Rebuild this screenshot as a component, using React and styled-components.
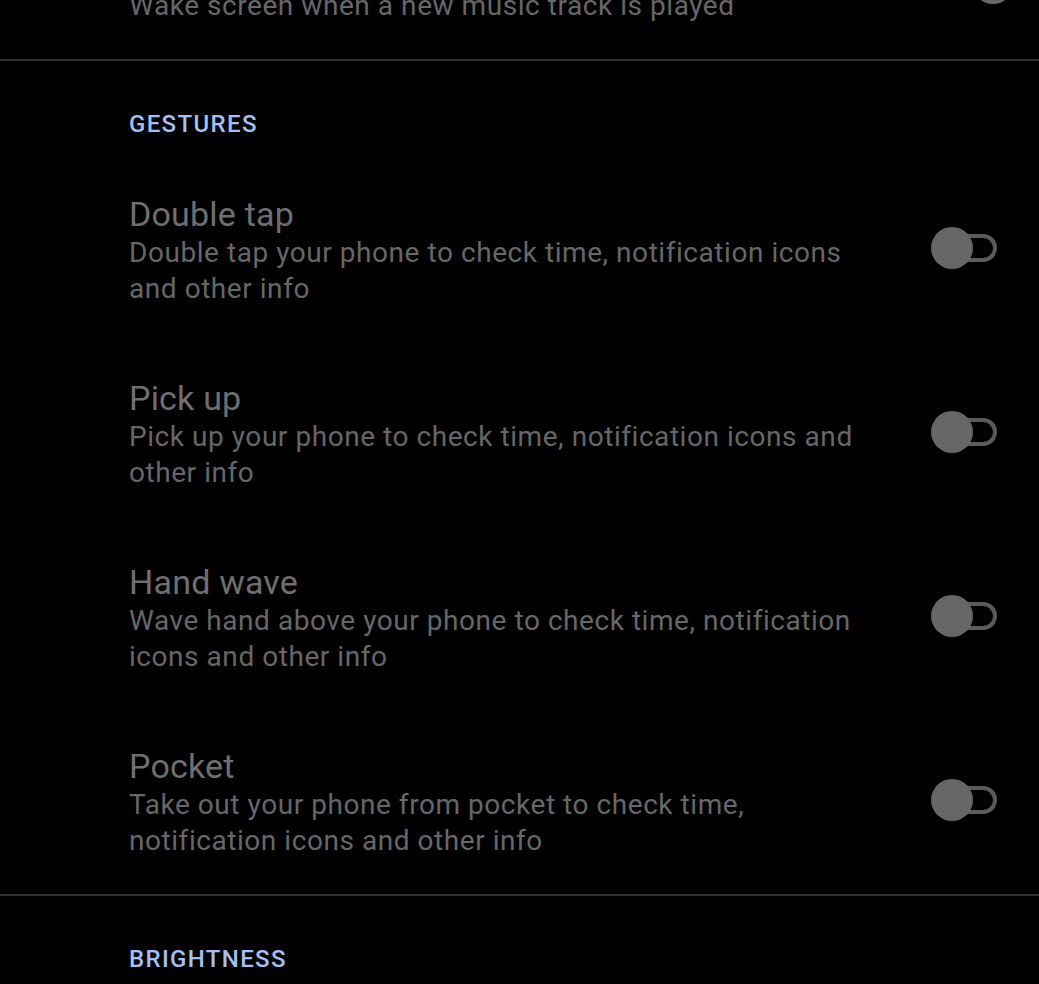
import React from "react";
import styled, { createGlobalStyle } from "styled-components";

const Global = createGlobalStyle`
  html, body { margin: 0; padding: 0; background: #000; }
  body { font-family: Roboto, "Noto Sans", sans-serif; overflow: hidden; }
`;

const Page = styled.div`
  width: 1039px;
  height: 984px;
  overflow: hidden;
  background: #000;
`;

const Scroll = styled.div`
  margin-top: -89px;
  display: flex;
  flex-direction: column;
`;

const Divider = styled.div`
  height: 2px;
  background: #303030;
`;

const Header = styled.div`
  padding: 49px 0 20px 129px;
  font-size: 24px;
  line-height: 28px;
  letter-spacing: 1.35px;
  font-weight: 500;
  color: #a3c0f4;
  text-transform: uppercase;
`;

const Row = styled.div`
  display: grid;
  grid-template-columns: 1fr 76px;
  column-gap: 50px;
  align-items: center;
  padding: 35px 32px 35px 129px;
`;

const Texts = styled.div`
  display: flex;
  flex-direction: column;
`;

const Title = styled.div`
  font-size: 34px;
  line-height: 42px;
  letter-spacing: 0.2px;
  color: #6f6f6f;
`;

const Desc = styled.div`
  font-size: 28px;
  line-height: 36px;
  letter-spacing: 0.55px;
  color: #676767;
`;

const Switch = styled.div`
  position: relative;
  width: 76px;
  height: 42px;
  margin-bottom: 4px;
`;

const Track = styled.div`
  position: absolute;
  left: 10px;
  right: 10px;
  top: 7px;
  height: 28px;
  box-sizing: border-box;
  border: 4px solid #5b5b5b;
  border-radius: 14px;
`;

const Thumb = styled.div`
  position: absolute;
  top: 0;
  left: ${(p) => (p.$on ? "41px" : "0")};
  width: 42px;
  height: 42px;
  border-radius: 50%;
  background: #676767;
`;

const Toggle = ({ on }) => (
  <Switch>
    <Track />
    <Thumb $on={on} />
  </Switch>
);

const Item = ({ title, desc, on }) => (
  <Row>
    <Texts>
      <Title>{title}</Title>
      <Desc>{desc}</Desc>
    </Texts>
    <Toggle on={on} />
  </Row>
);

const gestures = [
  { title: "Double tap", desc: "Double tap your phone to check time, notification icons and other info" },
  { title: "Pick up", desc: "Pick up your phone to check time, notification icons and other info" },
  { title: "Hand wave", desc: "Wave hand above your phone to check time, notification icons and other info" },
  { title: "Pocket", desc: "Take out your phone from pocket to check time, notification icons and other info" },
];

export default function App() {
  return (
    <Page>
      <Global />
      <Scroll>
        <Item title="New music" desc="Wake screen when a new music track is played" on />
        <Divider />
        <Header>Gestures</Header>
        {gestures.map((g) => (
          <Item key={g.title} {...g} />
        ))}
        <Divider />
        <Header>Brightness</Header>
      </Scroll>
    </Page>
  );
}
